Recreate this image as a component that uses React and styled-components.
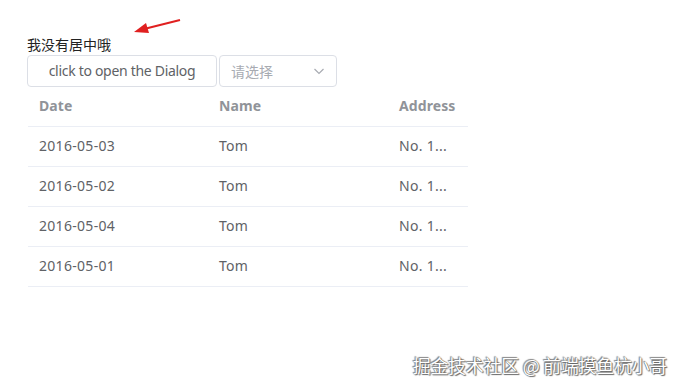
import React from "react";
import styled, { createGlobalStyle } from "styled-components";

const Global = createGlobalStyle`
  html, body { margin: 0; padding: 0; background: #fff; }
  body { font-family: "Noto Sans", "Noto Sans CJK SC", sans-serif; }
`;

const Page = styled.div`
  position: relative;
  width: 694px;
  height: 390px;
  padding: 33px 0 0 27px;
  box-sizing: border-box;
`;

const Label = styled.div`
  font-family: "Noto Sans CJK SC", sans-serif;
  font-size: 14px;
  line-height: 22px;
  color: #222;
`;

const Controls = styled.div`
  display: flex;
  gap: 2px;
`;

const Button = styled.button`
  height: 32px;
  width: 190px;
  border: 1px solid #dcdfe6;
  border-radius: 4px;
  background: #fff;
  color: #606266;
  font-family: "Noto Sans", sans-serif;
  font-size: 14px;
  letter-spacing: -0.3px;
  padding: 0 0 2px;
  box-sizing: border-box;
`;

const Select = styled.div`
  height: 32px;
  width: 118px;
  border: 1px solid #dcdfe6;
  border-radius: 4px;
  box-sizing: border-box;
  display: flex;
  align-items: center;
  justify-content: space-between;
  padding: 0 11px;
  color: #a8abb2;
  font-family: "Noto Sans CJK SC", sans-serif;
  font-size: 14px;
`;

const Table = styled.div`
  width: 440px;
  margin-left: 1px;
  display: grid;
  grid-template-columns: 180px 180px 80px;
`;

const Cell = styled.div`
  height: 40px;
  box-sizing: border-box;
  border-bottom: 1px solid #ebeef5;
  padding: 0 11px 3px;
  display: flex;
  align-items: center;
  font-size: 14px;
  letter-spacing: ${(p) => (p.$head ? "0.1px" : "0.3px")};
  color: ${(p) => (p.$head ? "#909399" : "#606266")};
  font-weight: ${(p) => (p.$head ? 700 : 400)};
  white-space: nowrap;
  overflow: hidden;
`;

const Arrow = styled.svg`
  position: absolute;
  left: 130px;
  top: 16px;
`;

const Watermark = styled.div`
  position: absolute;
  right: 27px;
  bottom: 12px;
  font-family: "Noto Sans CJK SC", sans-serif;
  font-size: 18px;
  letter-spacing: -0.3px;
  color: #fff;
  text-shadow: 0 0 1px #555, 1px 1px 1px #666, -1px -1px 1px #888;
`;

const rows = ["2016-05-03", "2016-05-02", "2016-05-04", "2016-05-01"];

export default function App() {
  return (
    <Page>
      <Global />
      <Arrow width="56" height="22" viewBox="0 0 56 22">
        <line x1="50" y1="4" x2="14" y2="13" stroke="#e02020" strokeWidth="2.2" />
        <polygon points="4,16 16,7 19,17" fill="#e02020" />
      </Arrow>
      <Label>我没有居中哦</Label>
      <Controls>
        <Button>click to open the Dialog</Button>
        <Select>
          <span>请选择</span>
          <svg width="12" height="12" viewBox="0 0 12 12">
            <polyline points="1.5,4 6,8.5 10.5,4" fill="none" stroke="#a8abb2" strokeWidth="1.2" />
          </svg>
        </Select>
      </Controls>
      <Table>
        <Cell $head>Date</Cell>
        <Cell $head>Name</Cell>
        <Cell $head>Address</Cell>
        {rows.map((d) => (
          <React.Fragment key={d}>
            <Cell>{d}</Cell>
            <Cell>Tom</Cell>
            <Cell>No. 1...</Cell>
          </React.Fragment>
        ))}
      </Table>
      <Watermark>掘金技术社区 @ 前端摸鱼杭小哥</Watermark>
    </Page>
  );
}
